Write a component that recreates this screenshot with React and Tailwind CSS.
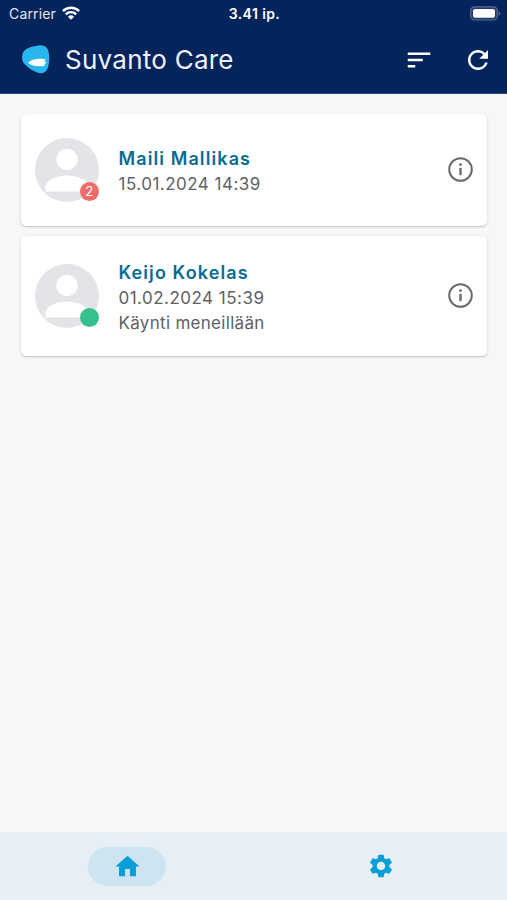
import { MdHome, MdRefresh, MdSettings, MdSort } from 'react-icons/md';

const visits = [
  { id: 1, name: 'Maili Mallikas', time: '15.01.2024 14:39', unread: 2 },
  { id: 2, name: 'Keijo Kokelas', time: '01.02.2024 15:39', status: 'Käynti meneillään' },
];

const StatusBar = () => (
  <div className="grid grid-cols-3 items-center h-[27px] pl-[9px] pr-[7px] text-[14px] leading-none text-white">
    <div className="flex items-center gap-[6px]">
      <span className="tracking-[0.15px] text-[#e3e8f2]">Carrier</span>
      <svg className="w-[18px] h-[14px] -mt-[2px]" viewBox="0 0 18 14" fill="none" stroke="currentColor" strokeWidth="2.4">
        <path d="M0.9 5.1a11.6 11.6 0 0 1 16.2 0" />
        <path d="M3.8 8.3a7.4 7.4 0 0 1 10.4 0" />
        <path d="M9 13.8 5.9 10.7a4.5 4.5 0 0 1 6.2 0z" fill="currentColor" stroke="none" />
      </svg>
    </div>
    <span className="text-center font-semibold tracking-[0.4px]">3.41 ip.</span>
    <svg className="justify-self-end w-[31px] h-[15px] mr-[-1px]" viewBox="0 0 31 15">
      <rect x="0.7" y="0.8" width="26.6" height="13.2" rx="4" fill="#1f3b6e" stroke="#566c94" strokeWidth="1.2" />
      <rect x="3" y="3" width="22" height="8.8" rx="2" fill="#fff" />
      <path d="M28.6 5.2c2.2.7 2.2 3.7 0 4.4z" fill="#566c94" />
    </svg>
  </div>
);

const Logo = () => (
  <svg className="w-[28px] h-[29px] -mt-[2px]" viewBox="0 0 28 29">
    <path d="M17 .4C22.500-.2 26 2.500 26.800 8c.6 4.500.5 8.500-.3 12.500-1 5-4.100 8.100-8 7.700C13 27.600 4.500 22.300 1.300 17.500-.6 14.300-.2 9 2 6 4.800 2.500 11.500 1 17 .4z" fill="#29b6ee" />
    <path d="M6.300 17.400c2.600-2.500 7-3.500 11-3.600 2.700 0 5.300.1 6.200.7.600.5-.2 1.200-1.600 1.700 1.700.3 2.300.9 2.200 1.500-.1.700-1 .9-2.200 1 .8.500 1.200 1.100.6 1.700-1.400 1.100-4.200 1.100-6.800.8-3.800-.4-7.600-1.500-9.400-3-.3-.3-.3-.5 0-.8z" fill="#fff" />
  </svg>
);

const InfoIcon = () => (
  <svg className="w-[25px] h-[25px]" viewBox="0 0 25 25" fill="#6b6b6b">
    <circle cx="12.5" cy="12.5" r="11.300" fill="none" stroke="#6b6b6b" strokeWidth="2" />
    <circle cx="12.5" cy="7.600" r="1.400" />
    <rect x="11.300" y="10.700" width="2.400" height="7.600" rx="0.8" />
  </svg>
);

const Avatar = ({ unread }) => (
  <div className="relative w-16 h-16 shrink-0">
    <svg className="w-full h-full" viewBox="0 0 64 64">
      <circle cx="32" cy="32" r="32" fill="#e2e4e7" />
      <circle cx="32" cy="21.500" r="10.700" fill="#fff" />
      <path d="M10.500 53.500V49C10.500 41.500 23 37.500 32 37.500S53.500 41.500 53.500 49v4.500z" fill="#fff" />
    </svg>
    <span
      className={`absolute right-0 bottom-[0.5px] flex items-center justify-center w-[19.5px] h-[19.5px] rounded-full text-[13px] leading-none text-white ${unread ? 'bg-[#f26b6b]' : 'bg-[#36c08c]'}`}
    >
      {unread}
    </span>
  </div>
);

const VisitCard = ({ visit }) => (
  <div
    className={`flex items-center pl-[14.5px] pr-[13.5px] rounded-[5px] bg-white shadow-[0_1px_3px_rgba(0,0,0,0.14),0_1px_1px_rgba(0,0,0,0.1)] ${visit.status ? 'h-[120.5px]' : 'h-[112px]'}`}
  >
    <Avatar unread={visit.unread} />
    <div className="flex-1 pt-[4px] ml-[19.5px] text-[17px] leading-[25px] tracking-[0.48px] text-[#606163]">
      <h2 className="text-[18px] leading-[26px] font-semibold tracking-[1.1px] text-[#096b92]">{visit.name}</h2>
      <p>{visit.time}</p>
      {visit.status && <p className="tracking-[0.3px]">{visit.status}</p>}
    </div>
    <InfoIcon />
  </div>
);

export default function App() {
  return (
    <div className="flex flex-col w-full h-screen bg-[#f7f7f7] font-['Inter',sans-serif]">
      <header className="h-[94px] bg-[#04245c] border-b border-[#314b80]">
        <StatusBar />
        <div className="flex items-center h-[66px] pl-[22px] pr-[14px] text-white">
          <Logo />
          <h1 className="flex-1 ml-[15px] text-[26px] leading-none tracking-[0.25px] text-[#eef1f7]">Suvanto Care</h1>
          <MdSort className="w-[30px] h-[30px] mr-[29px]" />
          <MdRefresh className="w-[30px] h-[30px]" />
        </div>
      </header>

      <main className="flex flex-col flex-1 gap-[10px] px-[20.5px] pt-[19.5px]">
        {visits.map((visit) => (
          <VisitCard key={visit.id} visit={visit} />
        ))}
      </main>

      <nav className="grid grid-cols-2 items-center justify-items-center h-[68px] bg-[#e6eff5] text-[#0a9fd6]">
        <div className="flex items-center justify-center w-[78px] h-[39px] pl-px ml-px rounded-full bg-[#cfe4f1]">
          <MdHome className="w-[29px] h-[29px]" />
        </div>
        <MdSettings className="w-[28px] h-[28px] ml-px" />
      </nav>
    </div>
  );
}
